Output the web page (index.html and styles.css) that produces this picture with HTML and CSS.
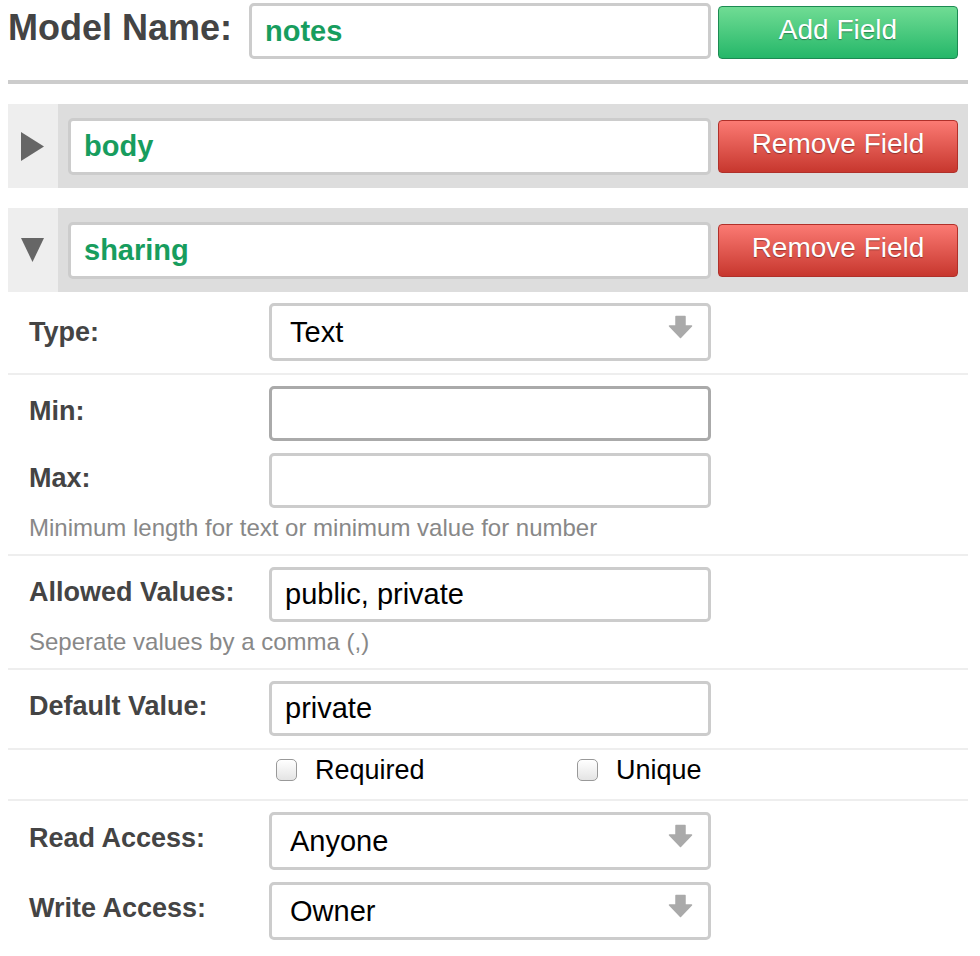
FILE: index.html
```html
<!DOCTYPE html>
<html lang="en">
<head>
    <meta charset="UTF-8">
    <meta name="viewport" content="width=device-width, initial-scale=1.0">
    <title>Model Editor</title>
    <link rel="stylesheet" href="styles.css">
</head>
<body>
    <div class="page">
        <!-- model name + add button -->
        <div class="model_head">
            <label class="model_label" for="modelName">Model Name:</label>
            <input class="name_input" id="modelName" type="text" value="notes">
            <button class="btn btn_add">Add Field</button>
        </div>
        <hr class="head_rule">

        <!-- collapsed field -->
        <div class="field_bar">
            <a class="toggle" href="javascript:;">
                <svg width="23" height="29" viewBox="0 0 23 29"><polygon points="0,0 23,14.5 0,29" fill="#666"/></svg>
            </a>
            <input class="name_input field_name" type="text" value="body">
            <button class="btn btn_remove">Remove Field</button>
        </div>

        <!-- expanded field -->
        <div class="field_bar">
            <a class="toggle" href="javascript:;">
                <svg width="23" height="24" viewBox="0 0 23 24"><polygon points="0,0 23,0 11.5,24" fill="#666"/></svg>
            </a>
            <input class="name_input field_name" type="text" value="sharing">
            <button class="btn btn_remove">Remove Field</button>
        </div>

        <div class="field_detail">
            <div class="group">
                <div class="row">
                    <label class="row_label label_type">Type:</label>
                    <div class="select_box">
                        <select class="select">
                            <option>Text</option>
                            <option>Number</option>
                            <option>Boolean</option>
                            <option>Date</option>
                        </select>
                        <svg class="select_arrow" width="25" height="24" viewBox="0 0 25 24"><path d="M8 1.5H17V11H23.5L12.5 22.5L1.5 11H8Z" fill="#aaa" stroke="#aaa" stroke-width="1.5" stroke-linejoin="round"/></svg>
                    </div>
                </div>
            </div>

            <div class="group">
                <div class="row">
                    <label class="row_label">Min:</label>
                    <input class="text_input focus" type="text">
                </div>
                <div class="row">
                    <label class="row_label">Max:</label>
                    <input class="text_input" type="text">
                </div>
                <p class="hint">Minimum length for text or minimum value for number</p>
            </div>

            <div class="group">
                <div class="row">
                    <label class="row_label">Allowed Values:</label>
                    <input class="text_input" type="text" value="public, private">
                </div>
                <p class="hint">Seperate values by a comma (,)</p>
            </div>

            <div class="group">
                <div class="row">
                    <label class="row_label">Default Value:</label>
                    <input class="text_input" type="text" value="private">
                </div>
            </div>

            <div class="group group_checks">
                <div class="checks">
                    <label class="check"><input type="checkbox"> Required</label>
                    <label class="check"><input type="checkbox"> Unique</label>
                </div>
            </div>

            <div class="group group_last">
                <div class="row">
                    <label class="row_label">Read Access:</label>
                    <div class="select_box">
                        <select class="select">
                            <option>Anyone</option>
                            <option>Owner</option>
                        </select>
                        <svg class="select_arrow" width="25" height="24" viewBox="0 0 25 24"><path d="M8 1.5H17V11H23.5L12.5 22.5L1.5 11H8Z" fill="#aaa" stroke="#aaa" stroke-width="1.5" stroke-linejoin="round"/></svg>
                    </div>
                </div>
                <div class="row">
                    <label class="row_label">Write Access:</label>
                    <div class="select_box">
                        <select class="select">
                            <option>Owner</option>
                            <option>Anyone</option>
                        </select>
                        <svg class="select_arrow" width="25" height="24" viewBox="0 0 25 24"><path d="M8 1.5H17V11H23.5L12.5 22.5L1.5 11H8Z" fill="#aaa" stroke="#aaa" stroke-width="1.5" stroke-linejoin="round"/></svg>
                    </div>
                </div>
            </div>
        </div>
    </div>
</body>
</html>
```

FILE: styles.css
```css
*{
    margin: 0;
    padding: 0;
    box-sizing: border-box;
}
body{
    font-family: "Liberation Sans", Arial, Helvetica, sans-serif;
    color: #444;
    background-color: #fff;
}
.page{
    width: 960px;
    margin-left: 8px;
    padding-top: 3px;
}
/* 顶部：模型名称 */
.model_head{
    display: flex;
    align-items: center;
    height: 56px;
}
.model_label{
    width: 241px;
    font-size: 36px;
    font-weight: bold;
    line-height: 40px;
    margin-bottom: 7px;
}
.name_input{
    width: 462px;
    height: 56px;
    border: 3px solid #ccc;
    border-radius: 5px;
    padding: 0 13px;
    font-family: inherit;
    font-size: 29px;
    font-weight: bold;
    color: #179d5e;
    outline: none;
    background-color: #fff;
}
.btn{
    width: 240px;
    height: 53px;
    margin-left: 7px;
    border-radius: 4px;
    font-family: inherit;
    font-size: 28px;
    color: #fff;
    padding-bottom: 5px;
    text-shadow: 0 1px 1px rgba(0,0,0,0.35);
    cursor: pointer;
}
.btn_add{
    align-self: flex-end;
    background: linear-gradient(#70dc94, #25b769);
    border: 1px solid #1c8a52;
}
.btn_remove{
    background: linear-gradient(#fb7a73, #c7372e);
    border: 1px solid #b0302a;
}
.head_rule{
    border: none;
    border-top: 4px solid #ccc;
    margin: 21px 0 20px;
}
/* 字段条 */
.field_bar{
    display: flex;
    align-items: center;
    height: 84px;
    background-color: #ddd;
    margin-bottom: 20px;
    padding-right: 9px;
}
.toggle{
    display: flex;
    align-items: center;
    justify-content: center;
    width: 50px;
    height: 84px;
    background-color: #eee;
    margin-right: 10px;
    padding-right: 1px;
}
.field_name{
    width: 643px;
    height: 57px;
}
/* 展开的字段详情 */
.field_detail{
    margin-top: -20px;
}
.group{
    padding: 11px 0 12px 21px;
    border-bottom: 2px solid #eee;
}
.group_last{
    border-bottom: none;
}
.row{
    display: flex;
    align-items: center;
}
.row + .row{
    margin-top: 12px;
}
.row_label{
    width: 240px;
    font-size: 27px;
    font-weight: bold;
    line-height: 32px;
    margin-bottom: 6px;
}
.label_type{
    margin-bottom: 0;
}
.text_input{
    width: 442px;
    height: 55px;
    border: 3px solid #ccc;
    border-radius: 5px;
    padding: 0 13px;
    font-family: inherit;
    font-size: 29px;
    color: #000;
    outline: none;
}
.text_input.focus{
    border-color: #aaa;
}
.hint{
    font-size: 24px;
    line-height: 28px;
    color: #888;
    margin-top: 6px;
}
.select_box{
    position: relative;
    width: 442px;
    height: 58px;
}
.select{
    -webkit-appearance: none;
    appearance: none;
    width: 100%;
    height: 100%;
    border: 3px solid #ccc;
    border-radius: 5px;
    padding: 0 18px;
    font-family: inherit;
    font-size: 29px;
    color: #000;
    background-color: #fff;
    outline: none;
}
.select_arrow{
    position: absolute;
    right: 18px;
    top: 12px;
    pointer-events: none;
}
/* 复选框 */
.group_checks{
    padding: 4px 0 13px 261px;
}
.checks{
    display: grid;
    grid-template-columns: 301px 130px;
    padding-left: 7px;
}
.check{
    display: flex;
    align-items: center;
    font-size: 27px;
    line-height: 32px;
    color: #000;
}
.check input{
    -webkit-appearance: none;
    appearance: none;
    width: 21px;
    height: 22px;
    border: 1px solid #999;
    border-radius: 5px;
    background: linear-gradient(#fff, #e4e4e4);
    box-shadow: inset 0 1px 1px rgba(255,255,255,0.8);
    margin-right: 18px;
}
```
